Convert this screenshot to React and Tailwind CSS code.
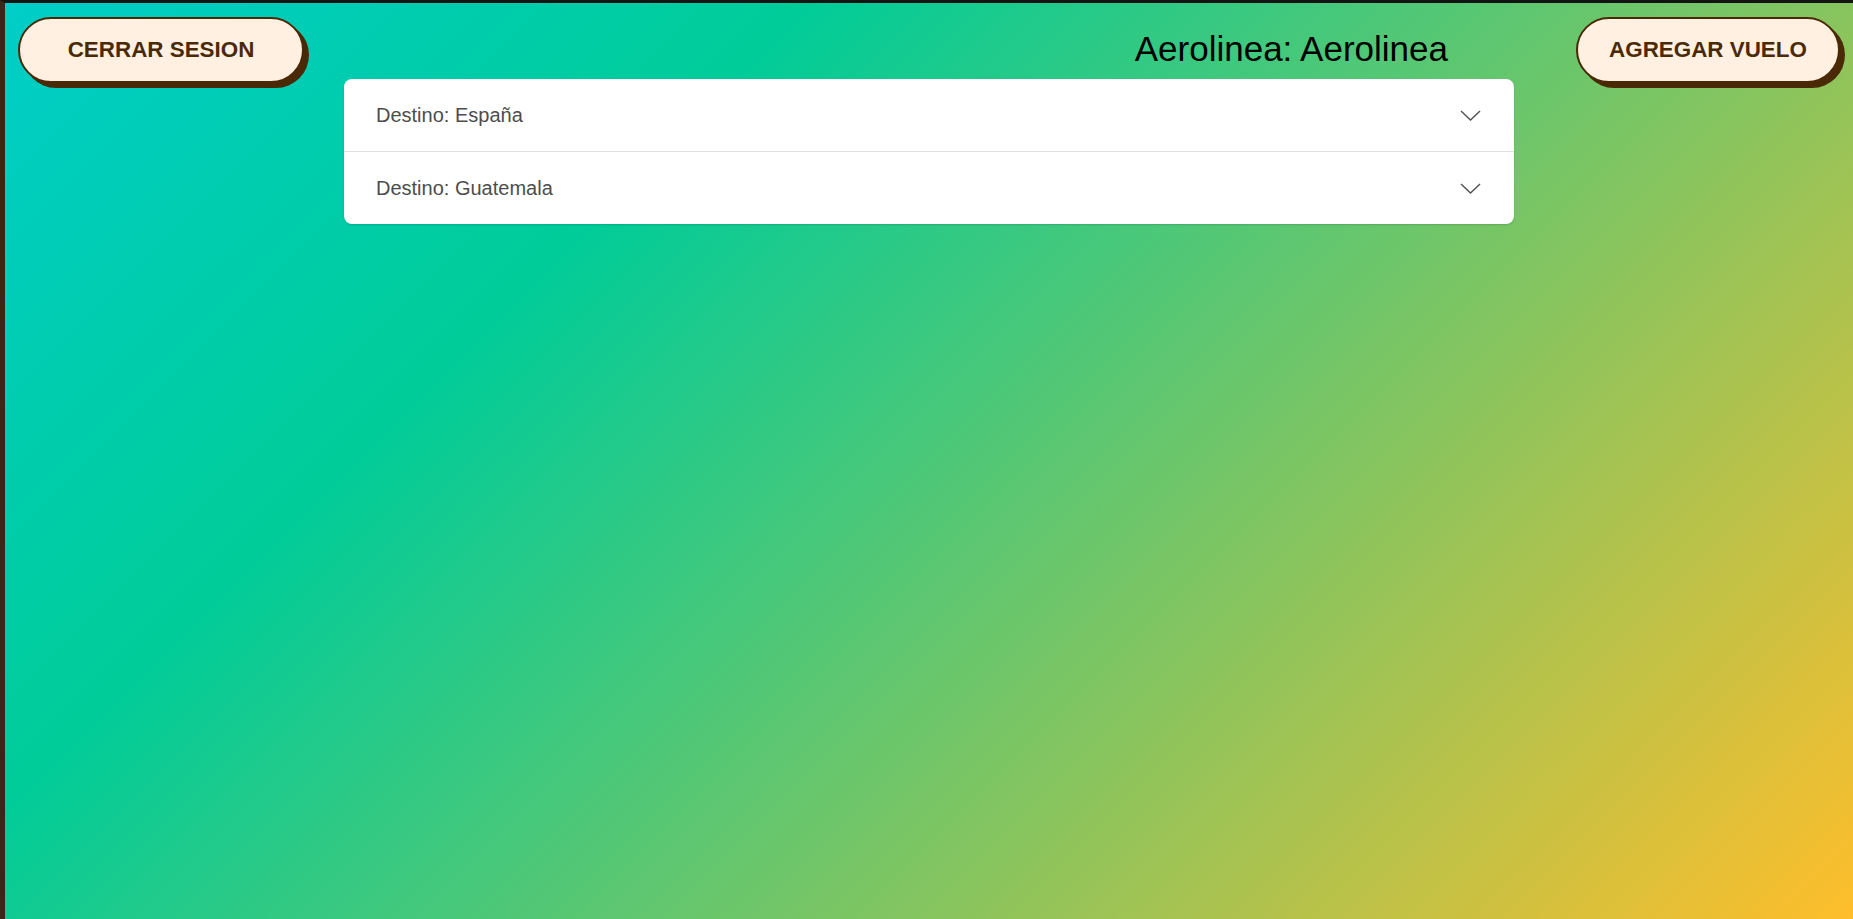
import React from 'react';

const destinos = ['España', 'Guatemala'];

function Chevron() {
  return (
    <svg width="21" height="11" viewBox="0 0 21 11" fill="none">
      <polyline points="1,1 10.5,10 20,1" stroke="#555555" strokeWidth="1.5" />
    </svg>
  );
}

function PillButton({ children, width }) {
  return (
    <button
      className={`h-[66px] ${width} rounded-full border-2 border-[#4a2a06] bg-[#fff0e2] text-[22.4px] font-bold text-[#4a2a06] shadow-[5px_5px_0_#4a2a06]`}
    >
      {children}
    </button>
  );
}

export default function App() {
  return (
    <div className="h-screen border-t-[3px] border-l-[5px] border-t-[#141414] border-l-[#3b2719] bg-[linear-gradient(135deg,#00cec8_0%,#00cc99_29%,#ffbe2b_100%)] font-['Liberation_Sans',Arial,sans-serif]">
      <div className="grid grid-cols-[1fr_1170px_1fr] items-start">
        {/* Left */}
        <div className="pl-[13px] pt-[14px]">
          <PillButton width="w-[286px]">CERRAR SESION</PillButton>
        </div>

        {/* Center */}
        <div className="pt-[26px]">
          <h1 className="h-[40px] pr-[66px] text-right text-[35px] leading-[40px] text-black">
            Aerolinea: Aerolinea
          </h1>
          <div className="mt-[10px] overflow-hidden rounded-lg bg-white shadow-[0_1px_2px_rgba(0,0,0,0.15)]">
            {destinos.map((d, i) => (
              <div
                key={d}
                className={`flex items-center justify-between pl-[32px] pr-[33px] ${
                  i < destinos.length - 1 ? 'h-[73px] border-b border-[#e0e0e0]' : 'h-[72px]'
                }`}
              >
                <span className="text-[20px] text-[#4d4d4d]">Destino: {d}</span>
                <Chevron />
              </div>
            ))}
          </div>
        </div>

        {/* Right */}
        <div className="flex justify-end pr-[13px] pt-[14px]">
          <PillButton width="w-[264px]">AGREGAR VUELO</PillButton>
        </div>
      </div>
    </div>
  );
}
